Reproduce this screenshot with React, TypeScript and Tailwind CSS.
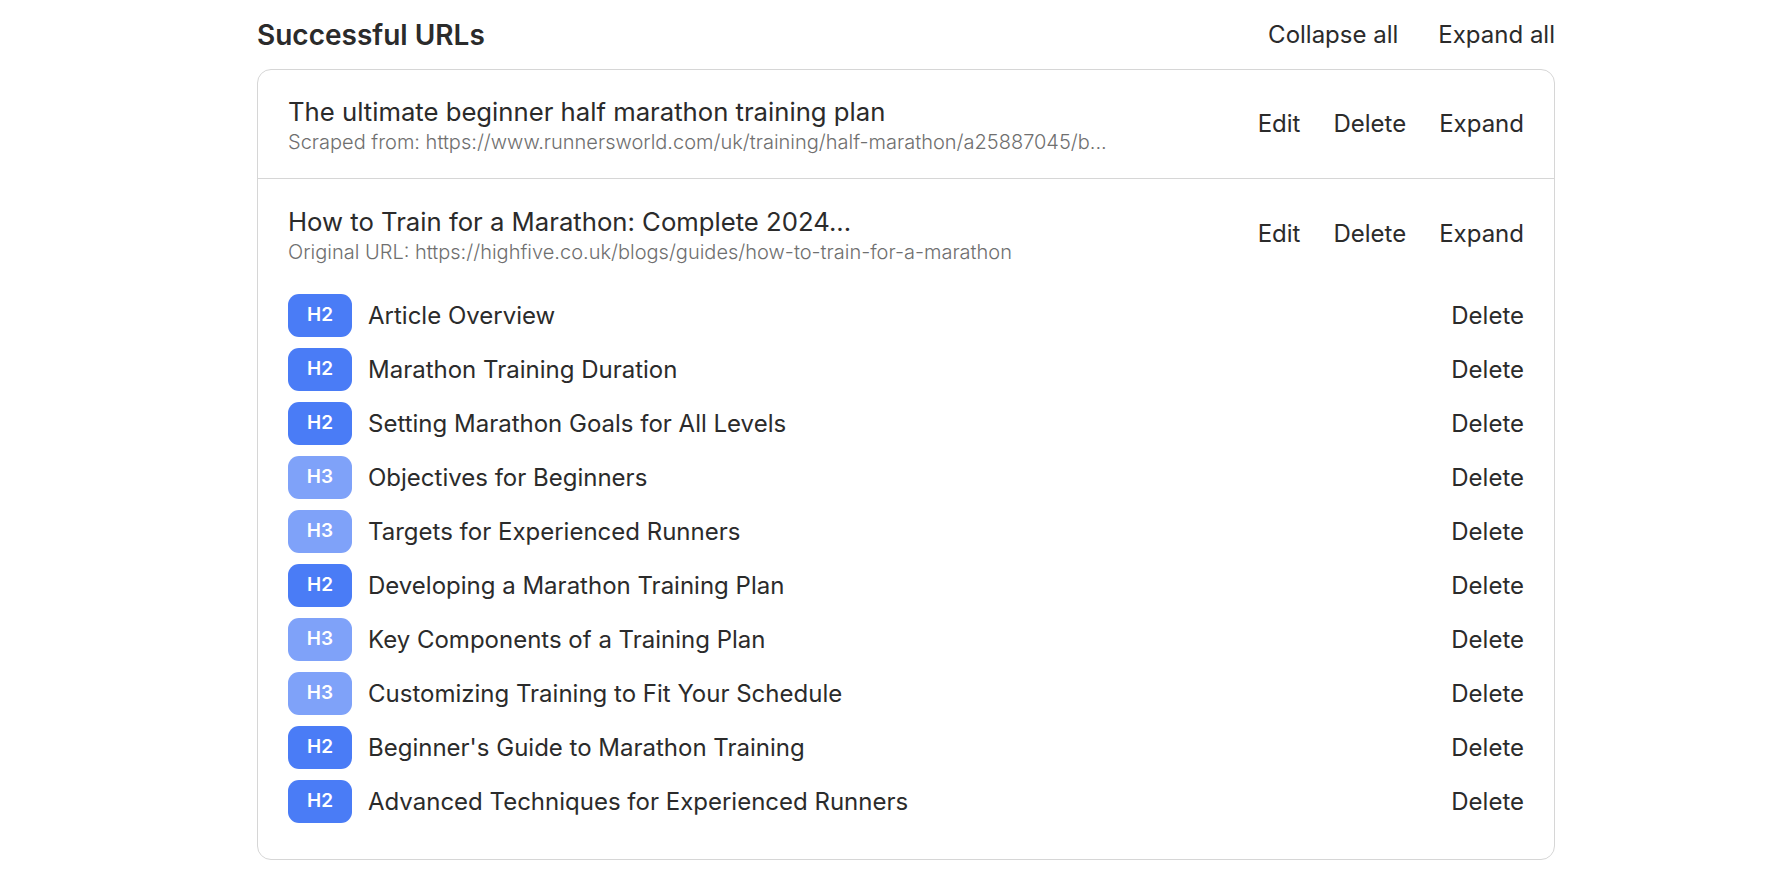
import React from "react";

type Heading = { level: "H2" | "H3"; text: string };

const headings: Heading[] = [
    { level: "H2", text: "Article Overview" },
    { level: "H2", text: "Marathon Training Duration" },
    { level: "H2", text: "Setting Marathon Goals for All Levels" },
    { level: "H3", text: "Objectives for Beginners" },
    { level: "H3", text: "Targets for Experienced Runners" },
    { level: "H2", text: "Developing a Marathon Training Plan" },
    { level: "H3", text: "Key Components of a Training Plan" },
    { level: "H3", text: "Customizing Training to Fit Your Schedule" },
    { level: "H2", text: "Beginner's Guide to Marathon Training" },
    { level: "H2", text: "Advanced Techniques for Experienced Runners" },
];

function ItemHeader({ title, sub }: { title: string; sub: string }) {
    return (
        <div className="flex items-center justify-between">
            <div className="flex flex-col">
                <p className="text-[25.7px] leading-[32px] text-[#2b2b2b]">{title}</p>
                <p className="text-[20px] leading-[28px] font-light text-[#6f6f6f]">{sub}</p>
            </div>
            <div className="flex items-center gap-[33px] pb-[4px] text-[24px] text-[#2b2b2b]">
                <button>Edit</button>
                <button>Delete</button>
                <button>Expand</button>
            </div>
        </div>
    );
}

export default function App() {
    return (
        <div className="min-h-screen bg-white font-['Inter',sans-serif] pl-[257px] pt-[17px]">
            <div className="w-[1298px]">
                {/* Header */}
                <div className="flex items-center justify-between h-[36px] mb-[16px]">
                    <h1 className="text-[28px] font-semibold text-[#2b2b2b]">Successful URLs</h1>
                    <div className="flex items-center gap-[40px] text-[24px] text-[#2b2b2b]">
                        <button>Collapse all</button>
                        <button>Expand all</button>
                    </div>
                </div>

                {/* Card */}
                <div className="border border-[#d6d6d6] rounded-[14px]">
                    <div className="px-[30px] pt-[26px] pb-[22px] border-b border-[#d6d6d6]">
                        <ItemHeader
                            title="The ultimate beginner half marathon training plan"
                            sub="Scraped from: https://www.runnersworld.com/uk/training/half-marathon/a25887045/b..."
                        />
                    </div>
                    <div className="px-[30px] pt-[27px] pb-[36px]">
                        <ItemHeader
                            title="How to Train for a Marathon: Complete 2024..."
                            sub="Original URL: https://highfive.co.uk/blogs/guides/how-to-train-for-a-marathon"
                        />
                        <div className="mt-[28px] flex flex-col gap-[11px]">
                            {headings.map((h, i) => (
                                <div key={i} className="flex items-center justify-between">
                                    <div className="flex items-center gap-[16px]">
                                        <span
                                            className={
                                                h.level === "H2"
                                                    ? "w-[64px] h-[43px] rounded-[11px] bg-[#4a7cf6] text-white text-[19px] font-semibold flex items-center justify-center"
                                                    : "w-[64px] h-[43px] rounded-[11px] bg-[#7fa2f9] text-white text-[19px] font-semibold flex items-center justify-center"
                                            }
                                        >
                                            {h.level}
                                        </span>
                                        <span className="text-[24px] text-[#2b2b2b]">{h.text}</span>
                                    </div>
                                    <button className="text-[24px] text-[#2b2b2b]">Delete</button>
                                </div>
                            ))}
                        </div>
                    </div>
                </div>
            </div>
        </div>
    );
}
